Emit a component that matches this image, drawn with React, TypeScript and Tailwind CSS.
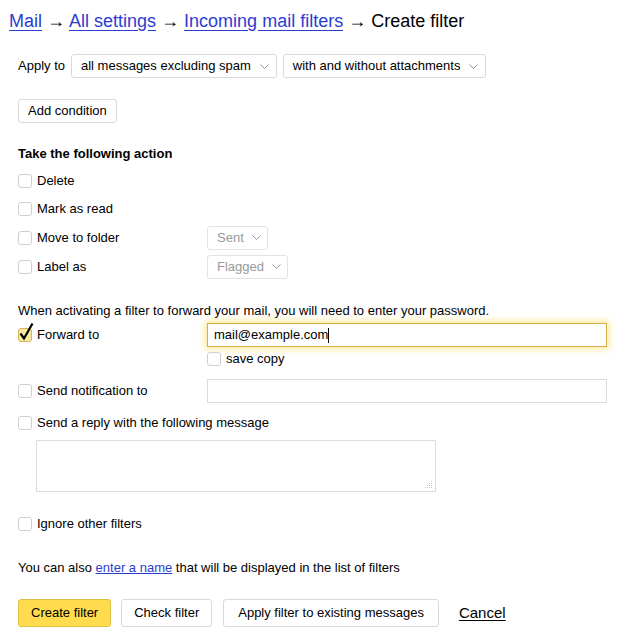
import React from "react";

function Chevron() {
  return (
    <svg width="9" height="5" viewBox="0 0 9 5" className="shrink-0">
      <path d="M0.5 0.5 L4.5 4.5 L8.5 0.5" fill="none" stroke="#999" strokeWidth="1" />
    </svg>
  );
}

function Checkbox({ checked = false }: { checked?: boolean }) {
  if (checked) {
    return (
      <span className="relative inline-block w-[14px] h-[14px] shrink-0 rounded-[3px] border border-[#d6b654] bg-[#fce9a6]">
        <svg width="17" height="19" viewBox="0 0 17 19" className="absolute left-[-1px] top-[-7px]">
          <path d="M2.5 11.5 L6 16.5 L14.5 1.5" fill="none" stroke="#000" strokeWidth="2.2" strokeLinejoin="miter" />
        </svg>
      </span>
    );
  }
  return <span className="inline-block w-[14px] h-[14px] shrink-0 rounded-[3px] border border-[#cfcfcf] bg-white" />;
}

function Select({ label, disabled = false }: { label: string; disabled?: boolean }) {
  return (
    <div
      className={`flex items-center h-[24px] pl-[9px] rounded-[3px] border ${
        disabled ? "pr-[6px] gap-[8px] border-[#e2e2e2] text-[#999]" : "pr-[7px] gap-[9px] border-[#d9d9d9] text-black"
      }`}
    >
      <span>{label}</span>
      <Chevron />
    </div>
  );
}

function Row({ label, h = 28, children }: { label: string; h?: number; children?: React.ReactNode }) {
  return (
    <div className="flex items-center" style={{ height: h }}>
      <div className="flex items-center gap-[5px] w-[189px] shrink-0">
        <Checkbox />
        <span>{label}</span>
      </div>
      {children}
    </div>
  );
}

export default function App() {
  return (
    <div className="min-h-screen bg-white text-black text-[13px] leading-[16px] font-['Liberation_Sans',Arial,sans-serif]">
      {/* Breadcrumbs */}
      <div className="pt-[10px] pl-[9px] h-[32px] text-[18px] leading-[22px]">
        <a className="text-[#2b3dd1] underline underline-offset-[3px]">Mail</a>
        <span> → </span>
        <a className="text-[#2b3dd1] underline underline-offset-[3px]">All settings</a>
        <span> → </span>
        <a className="text-[#2b3dd1] underline underline-offset-[3px]">Incoming mail filters</a>
        <span> → Create filter</span>
      </div>

      <div className="pl-[18px] pr-[13px]">
        {/* Apply to */}
        <div className="mt-[22px] flex items-center">
          <span className="mr-[6px]">Apply to</span>
          <Select label="all messages excluding spam" />
          <div className="w-[6px]" />
          <Select label="with and without attachments" />
        </div>

        <button className="mt-[21px] h-[24px] px-[9px] rounded-[3px] border border-[#d9d9d9] bg-white">
          Add condition
        </button>

        <div className="mt-[23px] font-bold">Take the following action</div>

        <div className="mt-[5px]">
          <Row label="Delete" />
          <Row label="Mark as read" />
          <Row label="Move to folder" h={29}>
            <Select label="Sent" disabled />
          </Row>
          <Row label="Label as" h={29}>
            <Select label="Flagged" disabled />
          </Row>
        </div>

        <div className="mt-[22px]">When activating a filter to forward your mail, you will need to enter your password.</div>

        {/* Forward to */}
        <div className="mt-[4px] flex items-start">
          <div className="flex items-center gap-[5px] w-[189px] h-[24px] shrink-0">
            <Checkbox checked />
            <span>Forward to</span>
          </div>
          <div className="flex-1">
            <div className="h-[24px] flex items-center px-[6px] border border-[#d2b04c] bg-white shadow-[0_0_7px_2px_rgba(255,214,64,0.55)]">
              <span>mail@example.com</span>
              <span className="inline-block w-px h-[15px] bg-black" />
            </div>
            <div className="mt-[4px] h-[16px] flex items-center gap-[5px]">
              <Checkbox />
              <span>save copy</span>
            </div>
          </div>
        </div>

        <div className="mt-[12px]">
          <Row label="Send notification to" h={24}>
            <div className="flex-1 h-[24px] border border-[#dcdcdc]" />
          </Row>
        </div>

        <div className="mt-[12px] h-[16px] flex items-center gap-[5px]">
          <Checkbox />
          <span>Send a reply with the following message</span>
        </div>

        <div className="relative mt-[9px] ml-[18px] w-[400px] h-[52px] border border-[#dcdcdc]">
          <svg width="9" height="9" viewBox="0 0 9 9" className="absolute right-[1px] bottom-[1px]">
            <g fill="#c8c8c8">
              <rect x="6" y="0" width="1" height="1" />
              <rect x="4" y="2" width="1" height="1" />
              <rect x="6" y="2" width="1" height="1" />
              <rect x="2" y="4" width="1" height="1" />
              <rect x="4" y="4" width="1" height="1" />
              <rect x="6" y="4" width="1" height="1" />
              <rect x="0" y="6" width="1" height="1" />
              <rect x="2" y="6" width="1" height="1" />
              <rect x="4" y="6" width="1" height="1" />
              <rect x="6" y="6" width="1" height="1" />
            </g>
          </svg>
        </div>

        <div className="mt-[24px] h-[16px] flex items-center gap-[5px]">
          <Checkbox />
          <span>Ignore other filters</span>
        </div>

        <div className="mt-[28px]">
          You can also <a className="text-[#2b3dd1] underline">enter a name</a> that will be displayed in the list of filters
        </div>

        <div className="mt-[23px] flex items-center">
          <button className="h-[28px] px-[12px] rounded-[3px] border border-[#dcbf45] bg-[#ffdb4d]">Create filter</button>
          <button className="ml-[10px] h-[28px] px-[12px] rounded-[3px] border border-[#d9d9d9] bg-white">Check filter</button>
          <button className="ml-[11px] h-[28px] px-[14px] rounded-[3px] border border-[#d9d9d9] bg-white">
            Apply filter to existing messages
          </button>
          <a className="ml-[20px] text-[15px] underline underline-offset-[2px]">Cancel</a>
        </div>
      </div>
    </div>
  );
}
